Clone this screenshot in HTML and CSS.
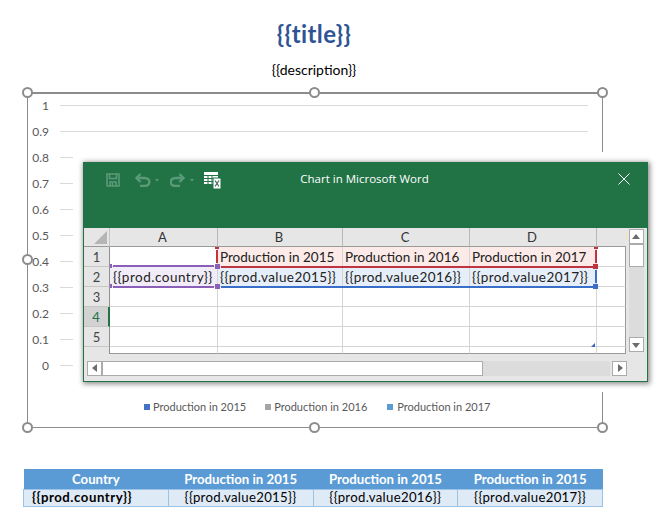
FILE: index.html
```html
<!DOCTYPE html>
<html>
<head>
    <title>Chart template</title>
    <link rel="stylesheet" href="styles.css">
</head>
<body>
    <div class="heading">
        <h1 class="title">{{title}}</h1>
        <p class="description">{{description}}</p>
    </div>

    <div class="chart">
        <div class="plot">
            <div class="tick"><span>1</span><i></i></div>
            <div class="tick"><span>0.9</span><i></i></div>
            <div class="tick"><span>0.8</span><i></i></div>
            <div class="tick"><span>0.7</span><i></i></div>
            <div class="tick"><span>0.6</span><i></i></div>
            <div class="tick"><span>0.5</span><i></i></div>
            <div class="tick"><span>0.4</span><i></i></div>
            <div class="tick"><span>0.3</span><i></i></div>
            <div class="tick"><span>0.2</span><i></i></div>
            <div class="tick"><span>0.1</span><i></i></div>
            <div class="tick"><span>0</span><i></i></div>
        </div>
        <div class="legend">
            <span class="legend-item"><i class="swatch swatch-a"></i>Production in 2015</span>
            <span class="legend-item"><i class="swatch swatch-b"></i>Production in 2016</span>
            <span class="legend-item"><i class="swatch swatch-c"></i>Production in 2017</span>
        </div>

        <i class="handle h-tl"></i>
        <i class="handle h-tm"></i>
        <i class="handle h-tr"></i>
        <i class="handle h-ml"></i>
        <i class="handle h-bl"></i>
        <i class="handle h-bm"></i>
        <i class="handle h-br"></i>

        <div class="window">
            <div class="titlebar">
                <svg class="qa-icon" width="14" height="14" viewBox="0 0 14 14" fill="none" stroke="#5b9a79" stroke-width="1.6">
                    <path d="M1 1h12v12H1z"/>
                    <path d="M3.5 1v4.5h7V1"/>
                    <path d="M4 13V9h6v4"/>
                    <path d="M6.5 10v3" stroke-width="1.4"/>
                </svg>
                <svg class="qa-icon undo" width="24" height="14" viewBox="0 0 24 14" fill="none" stroke="#5b9a79" stroke-width="2.4">
                    <path d="M5.5 1L1.500 5l4 4"/>
                    <path d="M2 5h7.500c6.500 0 6.500 8 0 8H5"/>
                    <path d="M20 6h4l-2 2.400z" fill="#5b9a79" stroke="none"/>
                </svg>
                <svg class="qa-icon redo" width="24" height="14" viewBox="0 0 24 14" fill="none" stroke="#5b9a79" stroke-width="2.4">
                    <path d="M9.500 1l4 4-4 4"/>
                    <path d="M13 5H5.500c-6.500 0-6.500 8 0 8H10"/>
                    <path d="M20 6h4l-2 2.400z" fill="#5b9a79" stroke="none"/>
                </svg>
                <svg class="qa-icon sheet-icon" width="17" height="17" viewBox="0 0 17 17">
                    <path d="M0 0h14v12H0z" fill="#fff"/>
                    <path d="M0 3.500h14M0 6.500h11M0 9.500h11M4 3.500V12M8 3.500V12" stroke="#217346" stroke-width="1" fill="none"/>
                    <path d="M9 6h8v11H9z" fill="#fff" stroke="#217346" stroke-width="1"/>
                    <path d="M11 8.500l4 6M15 8.500l-4 6" stroke="#44665a" stroke-width="1.200" fill="none"/>
                </svg>
                <span class="window-title">Chart in Microsoft Word</span>
                <svg class="close" width="12" height="12" viewBox="0 0 12 12" fill="none" stroke="#fff" stroke-width="1">
                    <path d="M.5.5l11 11M11.500.5l-11 11"/>
                </svg>
            </div>

            <div class="sheet-row">
                <div class="sheet">
                    <div class="corner"><i></i></div>
                    <div class="col-head">A</div>
                    <div class="col-head">B</div>
                    <div class="col-head">C</div>
                    <div class="col-head">D</div>
                    <div class="col-rest"><i></i></div>

                    <div class="row-head">1</div>
                    <div class="cell"></div>
                    <div class="cell pink">Production in 2015</div>
                    <div class="cell pink">Production in 2016</div>
                    <div class="cell pink">Production in 2017</div>
                    <div class="cell"></div>

                    <div class="row-head">2</div>
                    <div class="cell lilac">{{prod.country}}</div>
                    <div class="cell blue">{{prod.value2015}}</div>
                    <div class="cell blue">{{prod.value2016}}</div>
                    <div class="cell blue">{{prod.value2017}}</div>
                    <div class="cell"></div>

                    <div class="row-head">3</div>
                    <div class="cell"></div><div class="cell"></div><div class="cell"></div><div class="cell"></div><div class="cell"></div>

                    <div class="row-head active">4</div>
                    <div class="cell"></div><div class="cell"></div><div class="cell"></div><div class="cell"></div><div class="cell"></div>

                    <div class="row-head">5</div>
                    <div class="cell"></div><div class="cell"></div><div class="cell"></div><div class="cell"></div><div class="cell"></div>

                    <div class="row-head stub"></div>
                    <div class="cell"></div><div class="cell"></div><div class="cell"></div><div class="cell"></div><div class="cell"></div>

                    <i class="sel purple-h p-top"></i>
                    <i class="sel purple-h p-bot"></i>
                    <i class="sel red-h"></i>
                    <i class="sel blue-h"></i>
                    <i class="sel red-v1"></i>
                    <i class="sel red-v2"></i>
                    <i class="sel blue-v"></i>
                    <i class="knob k-purple k1"></i>
                    <i class="knob k-purple k2"></i>
                    <i class="knob k-red k3"></i>
                    <i class="knob k-blue k4"></i>
                    <i class="nub n1"></i>
                    <i class="nub n2"></i>
                    <i class="nub n3"></i>
                    <i class="nub n4"></i>
                    <i class="resize"></i>
                </div>

                <div class="vscroll">
                    <div class="sb-btn"><i class="arrow-up"></i></div>
                    <div class="v-thumb"></div>
                    <div class="sb-track"></div>
                    <div class="sb-btn"><i class="arrow-down"></i></div>
                </div>
            </div>

            <div class="hscroll">
                <div class="sb-btn"><i class="arrow-left"></i></div>
                <div class="h-thumb"></div>
                <div class="sb-track"></div>
                <div class="sb-btn"><i class="arrow-right"></i></div>
            </div>
        </div>
    </div>

    <table class="data">
        <tr>
            <th>Country</th>
            <th>Production in 2015</th>
            <th>Production in 2015</th>
            <th>Production in 2015</th>
        </tr>
        <tr>
            <td class="strong">{{prod.country}}</td>
            <td>{{prod.value2015}}</td>
            <td>{{prod.value2016}}</td>
            <td>{{prod.value2017}}</td>
        </tr>
    </table>
</body>
</html>
```

FILE: styles.css
```css
* {
    box-sizing: border-box;
    margin: 0;
}

body {
    width: 670px;
    height: 528px;
    padding-top: 20px;
    overflow: hidden;
    background: #fff;
    font-family: "Lato", "Liberation Sans", sans-serif;
    color: #000;
}

.heading {
    width: 574px;
    margin-left: 27px;
    text-align: center;
}

.title {
    height: 28px;
    line-height: 28px;
    font-size: 24px;
    font-weight: 700;
    letter-spacing: .4px;
    color: #2f5496;
}

.description {
    height: 20px;
    margin-top: 12px;
    line-height: 20px;
    font-size: 14px;
}

/* chart frame */
.chart {
    position: relative;
    width: 576px;
    height: 336px;
    margin: 12px 0 0 27px;
    border: 1px solid #8c8c8c;
    border-top-width: 2px;
}

.plot {
    margin-top: -2px;
}

.tick {
    display: flex;
    align-items: center;
    height: 26px;
    color: #595959;
    font-size: 12px;
}

.tick span {
    width: 21px;
    text-align: right;
}

.tick i {
    width: 528px;
    height: 1px;
    margin-left: 11px;
    background: #d9d9d9;
}

.legend {
    display: flex;
    gap: 19px;
    height: 16px;
    margin: 21px 0 0 116px;
    color: #595959;
    font-size: 11px;
    line-height: 16px;
}

.legend-item {
    display: flex;
    align-items: center;
    gap: 3px;
}

.swatch {
    width: 6px;
    height: 6px;
}

.swatch-a { background: #4472c4; }
.swatch-b { background: #a5a5a5; }
.swatch-c { background: #5b9bd5; margin-right: 1px; margin-left: 1px; }

.handle {
    position: absolute;
    width: 11px;
    height: 11px;
    border: 2px solid #8c8c8c;
    border-radius: 50%;
    background: #fff;
}

.h-tl { left: -6px; top: -7px; }
.h-tm { left: 281px; top: -7px; }
.h-tr { left: 569px; top: -7px; }
.h-ml { left: -6px; top: 160px; }
.h-bl { left: -6px; top: 328px; }
.h-bm { left: 281px; top: 328px; }
.h-br { left: 569px; top: 328px; }

/* excel window, sits over the chart */
.window {
    position: absolute;
    left: 55px;
    top: 68px;
    width: 565px;
    height: 220px;
    border: 1px solid #217346;
    border-top: 0;
    background: #e6e6e6;
    box-shadow: 1px 1px 5px 1px rgba(0, 0, 0, .45), 0 0 0 10px #fff;
}

.titlebar {
    position: relative;
    display: flex;
    align-items: flex-start;
    height: 66px;
    padding: 11px 0 0 22px;
    background: #217346;
}

.qa-icon {
    flex: none;
}

.undo { margin-left: 15px; }
.redo { margin-left: 11px; }
.sheet-icon { margin: -1px 0 0 10px; }

.window-title {
    position: absolute;
    left: 0;
    right: 2px;
    top: 8px;
    color: #fff;
    font-family: "Open Sans", sans-serif;
    font-size: 11.5px;
    line-height: 18px;
    text-align: center;
}

.close {
    position: absolute;
    right: 17px;
    top: 11px;
}

.sheet-row {
    display: flex;
    height: 126px;
}

.sheet {
    position: relative;
    display: grid;
    grid-template-columns: 26px 108px 125px 127px 127px 29px;
    grid-template-rows: 19px 20px 20px 20px 20px 20px 7px;
    width: 542px;
    height: 126px;
    font-size: 13.5px;
    color: #222;
}

.corner {
    position: relative;
    border-right: 1px solid #c6c6c6;
}

.corner i {
    position: absolute;
    left: 10px;
    top: 3px;
    width: 0;
    height: 0;
    border-left: 13px solid transparent;
    border-bottom: 13px solid #b5b5b5;
}

.col-head {
    padding-right: 2px;
    border-right: 1px solid #b8b8b8;
    text-align: center;
    line-height: 18px;
    font-size: 13px;
    color: #333;
}

.col-rest {
    position: relative;
    border-bottom: 1px solid #9a9a9a;
}

.col-rest i {
    position: absolute;
    right: -1px;
    top: 4px;
    width: 1px;
    height: 8px;
    background: #ece9a8;
}

.col-head,
.corner {
    border-bottom: 1px solid #9a9a9a;
}

.row-head {
    border-right: 1px solid #8f8f8f;
    border-bottom: 1px solid #c6c6c6;
    text-align: center;
    font-size: 13px;
    line-height: 21px;
    color: #444;
}

.row-head.active {
    border-right: 2px solid #217346;
    background: #d2d2d2;
    color: #217346;
}

.row-head.stub {
    border-bottom: 0;
}

.cell {
    padding-left: 2px;
    background: #fff;
    border-right: 1px solid #d4d4d4;
    border-bottom: 1px solid #d4d4d4;
    line-height: 20px;
    white-space: nowrap;
}

.cell:nth-child(6n) {
    border-right: 1px solid #9a9a9a;
}

.cell:nth-child(n+37) {
    border-bottom: 1px solid #9a9a9a;
}

.pink { background: #fbeae8; }
.blue { background: #e6eff9; letter-spacing: .42px; }
.lilac { background: #f1ecf7; padding-left: 3px; letter-spacing: .5px; }

/* range markers on top of the cells */
.sel,
.knob,
.nub,
.resize {
    position: absolute;
}

.sel { height: 2px; }
.purple-h { left: 29px; width: 101px; background: #8a5fb8; }
.p-top { top: 37px; }
.p-bot { top: 58px; }
.red-h { left: 137px; top: 38px; width: 372px; background: #c0343f; }
.blue-h { left: 137px; top: 58px; width: 372px; background: #3a6fc9; }
.red-v1 { left: 132px; top: 22px; width: 2px; height: 13px; background: #c0343f; }
.red-v2 { left: 511px; top: 22px; width: 2px; height: 13px; background: #c0343f; }
.blue-v { left: 511px; top: 42px; width: 2px; height: 13px; background: #3a6fc9; }

.knob {
    width: 5px;
    height: 5px;
}

.k-purple { background: #8a5fb8; }
.k-red { background: #c0343f; }
.k-blue { background: #3a6fc9; }
.k1 { left: 131px; top: 36px; }
.k2 { left: 131px; top: 56px; }
.k3 { left: 509px; top: 36px; }
.k4 { left: 509px; top: 56px; }

.nub { height: 2px; width: 4px; }
.n1 { left: 131px; top: 19px; background: #c0343f; }
.n2 { left: 510px; top: 19px; background: #c0343f; }
.n3 { left: 26px; top: 36px; width: 2px; height: 4px; background: #8a5fb8; }
.n4 { left: 26px; top: 56px; width: 2px; height: 4px; background: #8a5fb8; }

.resize {
    left: 507px;
    top: 115px;
    width: 0;
    height: 0;
    border-left: 4px solid transparent;
    border-bottom: 4px solid #3a5fc0;
}

/* scrollbars */
.vscroll {
    display: flex;
    flex-direction: column;
    width: 15px;
    height: 123px;
    margin: 1px 0 0 3px;
    background: #dcdcdc;
}

.sb-btn {
    position: relative;
    flex: none;
    width: 15px;
    height: 15px;
    border: 1px solid #ababab;
    background: #fff;
}

.sb-track {
    flex: 1;
    background: #dcdcdc;
}

.v-thumb {
    flex: none;
    height: 23px;
    border: 1px solid #ababab;
    background: #fff;
}

.hscroll {
    display: flex;
    align-items: center;
    height: 15px;
    margin: 7px 0 0 3px;
    width: 540px;
}

.h-thumb {
    flex: none;
    width: 381px;
    height: 15px;
    border: 1px solid #ababab;
    background: #fff;
}

.hscroll .sb-track {
    height: 15px;
    margin-right: 2px;
}

.sb-btn i {
    position: absolute;
    width: 0;
    height: 0;
}

.arrow-up {
    left: 2px;
    top: 4px;
    border-left: 4.500px solid transparent;
    border-right: 4.500px solid transparent;
    border-bottom: 5px solid #6d6d6d;
}

.arrow-down {
    left: 2px;
    top: 5px;
    border-left: 4.500px solid transparent;
    border-right: 4.500px solid transparent;
    border-top: 5px solid #6d6d6d;
}

.arrow-left {
    left: 4px;
    top: 2px;
    border-top: 4.500px solid transparent;
    border-bottom: 4.500px solid transparent;
    border-right: 5px solid #6d6d6d;
}

.arrow-right {
    left: 5px;
    top: 2px;
    border-top: 4.500px solid transparent;
    border-bottom: 4.500px solid transparent;
    border-left: 5px solid #6d6d6d;
}

/* table under the chart */
.data {
    width: 580px;
    margin: 41px 0 0 23px;
    border-collapse: collapse;
    table-layout: fixed;
    font-size: 13.2px;
}

.data th {
    height: 20px;
    padding: 0;
    background: #5b9bd5;
    color: #fff;
    font-weight: 700;
}

.data td {
    height: 17px;
    padding: 0;
    border: 1px solid #9cc2e5;
    background: #deeaf6;
    line-height: 15px;
    text-align: center;
    letter-spacing: .32px;
}

.data td.strong {
    padding-left: 8px;
    font-weight: 700;
    text-align: left;
    letter-spacing: .55px;
}
```
